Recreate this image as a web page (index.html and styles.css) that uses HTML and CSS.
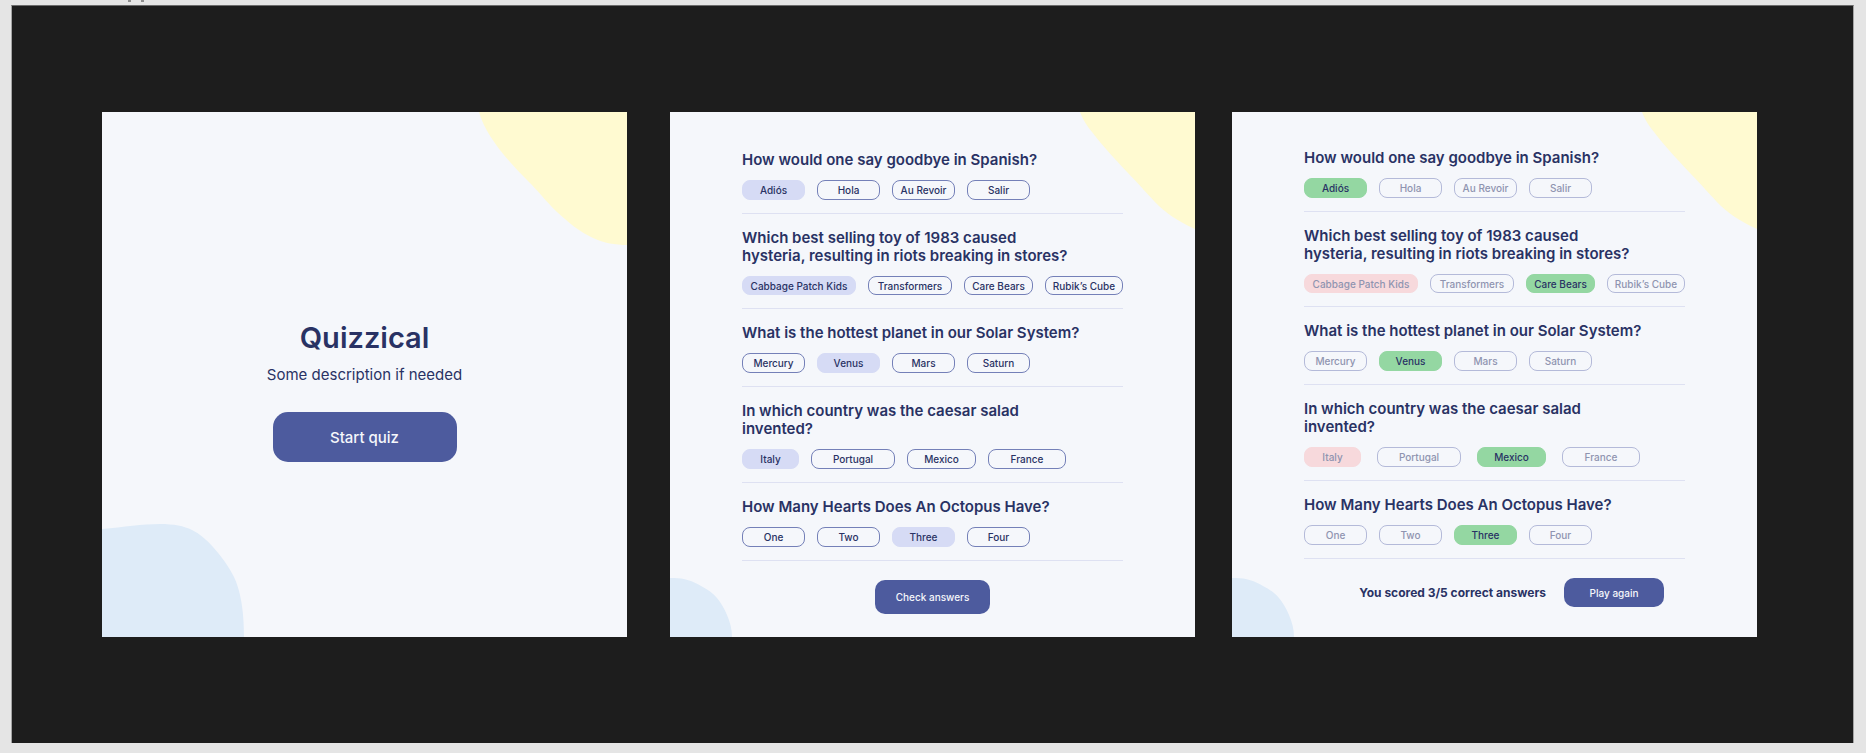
FILE: index.html
```html
<!DOCTYPE html>
<html lang="en">
<head>
<meta charset="utf-8">
<title>Quizzical</title>
<link rel="stylesheet" href="styles.css">
</head>
<body>
<div class="marks" aria-hidden="true"></div>
<main class="board">
  <section class="card card--intro">
    <svg class="blob blob--top" width="150" height="134" viewBox="0 0 150 134" aria-hidden="true"><path d="M2 0C8 22 28 46 50 68C64 82 66 86 80 100C92 111 103 120 116 126C127 131 138 133 150 133V0Z"/></svg>
    <svg class="blob blob--bottom" width="143" height="113" viewBox="0 0 143 113" aria-hidden="true"><path d="M0 5C22 3 40 0 58 0C72 0 82 2 90 6C98 10 105 16 111 23C120 33 127 43 132 53C138 66 142 84 142 113H0Z"/></svg>
    <h1 class="intro-title">Quizzical</h1>
    <p class="intro-text">Some description if needed</p>
    <button class="btn btn--large" type="button">Start quiz</button>
  </section>

  <section class="card card--quiz">
    <svg class="blob blob--top" width="118" height="118" viewBox="0 0 118 118" aria-hidden="true"><path d="M3 0C6 8 10 14 15 20C24 32 36 45 51 61C64 74 70 82 82 94C90 101 98 108 118 117V0Z"/></svg>
    <svg class="blob blob--bottom" width="62" height="59" viewBox="0 0 62 59" aria-hidden="true"><path d="M0 0H4C14 0 23 3 31 8C37 11 43 15 47 20C51 25 54 30 57 37C60 44 62 51 62 59H0Z"/></svg>
    <div class="item">
      <h2 class="question">How would one say goodbye in Spanish?</h2>
      <div class="options">
        <button class="chip chip--sm is-selected" type="button">Adiós</button>
        <button class="chip chip--sm" type="button">Hola</button>
        <button class="chip chip--sm" type="button">Au Revoir</button>
        <button class="chip chip--sm" type="button">Salir</button>
      </div>
    </div>
    <div class="item item--compact">
      <h2 class="question">Which best selling toy of 1983 caused<br>hysteria, resulting in riots breaking in stores?</h2>
      <div class="options">
        <button class="chip chip--2xl is-selected" type="button">Cabbage Patch Kids</button>
        <button class="chip chip--xl" type="button">Transformers</button>
        <button class="chip chip--md" type="button">Care Bears</button>
        <button class="chip chip--lg" type="button">Rubik’s Cube</button>
      </div>
    </div>
    <div class="item">
      <h2 class="question">What is the hottest planet in our Solar System?</h2>
      <div class="options">
        <button class="chip chip--sm" type="button">Mercury</button>
        <button class="chip chip--sm is-selected" type="button">Venus</button>
        <button class="chip chip--sm" type="button">Mars</button>
        <button class="chip chip--sm" type="button">Saturn</button>
      </div>
    </div>
    <div class="item">
      <h2 class="question">In which country was the caesar salad<br>invented?</h2>
      <div class="options">
        <button class="chip chip--xs is-selected" type="button">Italy</button>
        <button class="chip chip--xl" type="button">Portugal</button>
        <button class="chip chip--md" type="button">Mexico</button>
        <button class="chip chip--lg" type="button">France</button>
      </div>
    </div>
    <div class="item">
      <h2 class="question">How Many Hearts Does An Octopus Have?</h2>
      <div class="options">
        <button class="chip chip--sm" type="button">One</button>
        <button class="chip chip--sm" type="button">Two</button>
        <button class="chip chip--sm is-selected" type="button">Three</button>
        <button class="chip chip--sm" type="button">Four</button>
      </div>
    </div>
    <div class="footer">
      <button class="btn btn--check" type="button">Check answers</button>
    </div>
  </section>

  <section class="card card--result">
    <svg class="blob blob--top" width="118" height="118" viewBox="0 0 118 118" aria-hidden="true"><path d="M3 0C6 8 10 14 15 20C24 32 36 45 51 61C64 74 70 82 82 94C90 101 98 108 118 117V0Z"/></svg>
    <svg class="blob blob--bottom" width="62" height="59" viewBox="0 0 62 59" aria-hidden="true"><path d="M0 0H4C14 0 23 3 31 8C37 11 43 15 47 20C51 25 54 30 57 37C60 44 62 51 62 59H0Z"/></svg>
    <div class="item">
      <h2 class="question">How would one say goodbye in Spanish?</h2>
      <div class="options">
        <button class="chip chip--sm is-correct" type="button" disabled>Adiós</button>
        <button class="chip chip--sm" type="button" disabled>Hola</button>
        <button class="chip chip--sm" type="button" disabled>Au Revoir</button>
        <button class="chip chip--sm" type="button" disabled>Salir</button>
      </div>
    </div>
    <div class="item item--compact">
      <h2 class="question">Which best selling toy of 1983 caused<br>hysteria, resulting in riots breaking in stores?</h2>
      <div class="options">
        <button class="chip chip--2xl is-wrong" type="button" disabled>Cabbage Patch Kids</button>
        <button class="chip chip--xl" type="button" disabled>Transformers</button>
        <button class="chip chip--md is-correct" type="button" disabled>Care Bears</button>
        <button class="chip chip--lg" type="button" disabled>Rubik’s Cube</button>
      </div>
    </div>
    <div class="item">
      <h2 class="question">What is the hottest planet in our Solar System?</h2>
      <div class="options">
        <button class="chip chip--sm" type="button" disabled>Mercury</button>
        <button class="chip chip--sm is-correct" type="button" disabled>Venus</button>
        <button class="chip chip--sm" type="button" disabled>Mars</button>
        <button class="chip chip--sm" type="button" disabled>Saturn</button>
      </div>
    </div>
    <div class="item">
      <h2 class="question">In which country was the caesar salad<br>invented?</h2>
      <div class="options options--wide">
        <button class="chip chip--xs is-wrong" type="button" disabled>Italy</button>
        <button class="chip chip--xl" type="button" disabled>Portugal</button>
        <button class="chip chip--md is-correct" type="button" disabled>Mexico</button>
        <button class="chip chip--lg" type="button" disabled>France</button>
      </div>
    </div>
    <div class="item">
      <h2 class="question">How Many Hearts Does An Octopus Have?</h2>
      <div class="options">
        <button class="chip chip--sm" type="button" disabled>One</button>
        <button class="chip chip--sm" type="button" disabled>Two</button>
        <button class="chip chip--sm is-correct" type="button" disabled>Three</button>
        <button class="chip chip--sm" type="button" disabled>Four</button>
      </div>
    </div>
    <div class="footer footer--result">
      <p class="score">You scored 3/5 correct answers</p>
      <button class="btn btn--again" type="button">Play again</button>
    </div>
  </section>
</main>
</body>
</html>
```
FILE: styles.css
```css
:root {
  --navy: #293264;
  --primary: #4d5b9e;
  --page: #f5f7fb;
}

* { box-sizing: border-box; }

body {
  margin: 0;
  min-height: 100vh;
  padding: 5px 12px 10px 11px;
  display: flex;
  flex-direction: column;
  background: #e5e5e5;
  color: var(--navy);
  font-family: Inter, "Liberation Sans", sans-serif;
}

h1, h2, p { margin: 0; }

.marks {
  position: absolute;
  top: 0;
  left: 128px;
  width: 16px;
  height: 2px;
  border: solid #8e8e8e;
  border-width: 0 3px;
}

.board {
  flex: 1;
  display: grid;
  grid-template-columns: minmax(0, 1fr) 43px minmax(0, 1fr) 37px minmax(0, 1fr);
  align-items: start;
  padding: 106px 96px 106px 90px;
  background: #1d1d1d;
  border: solid #a4a4a4;
  border-width: 0 1px;
  border-top: 1px solid #6b6b6b;
}

.card {
  position: relative;
  min-height: 525px;
  padding: 24px 72px 20px;
  overflow: hidden;
  background: var(--page);
}

.card--quiz { grid-column: 3; }
.card--result { grid-column: 5; padding-top: 22px; }

.card--intro {
  grid-column: 1;
  display: flex;
  flex-direction: column;
  align-items: center;
  justify-content: center;
  padding: 33px 20px 0;
}

.blob { position: absolute; }
.blob--top { top: 0; right: 0; fill: #fffad1; }
.blob--bottom { bottom: 0; left: 0; fill: #deebf8; }

.intro-title { font-size: 29px; line-height: 36px; font-weight: 600; }
.intro-text { margin-top: 9px; font-size: 15px; line-height: 20px; }

.btn {
  border: 0;
  padding: 0;
  background: var(--primary);
  color: var(--page);
  font-family: inherit;
  font-weight: 500;
  font-size: 10px;
}

.btn--large { margin-top: 27px; width: 184px; height: 50px; border-radius: 15px; font-size: 15px; }
.btn--check { width: 115px; height: 34px; border-radius: 10px; }
.btn--again { width: 100px; height: 29px; border-radius: 10px; }

.item {
  position: relative;
  padding: 15px 0 13px;
  border-bottom: 1px solid #dee1f2;
}

.question { font-size: 15px; line-height: 18px; font-weight: 600; white-space: nowrap; }

.options { display: flex; gap: 12px; margin-top: 11px; }
.options--wide { gap: 16px; }

.chip {
  height: 20px;
  padding: 0;
  border: 1px solid #7480b8;
  border-radius: 8px;
  background: transparent;
  color: var(--navy);
  font-family: inherit;
  font-size: 10px;
  line-height: 12px;
  font-weight: 500;
  white-space: nowrap;
}

.item--compact .chip { height: 19px; }

.chip--xs { width: 57px; }
.chip--sm { width: 63px; }
.chip--md { width: 69px; }
.chip--lg { width: 78px; }
.chip--xl { width: 84px; }
.chip--2xl { width: 114px; }

.chip:disabled { border-color: #b4bad9; color: #8f94b0; }
.chip.is-selected { background: #d6dbf5; border-color: #d6dbf5; }
.chip.is-correct { background: #94d7a2; border-color: #94d7a2; color: var(--navy); }
.chip.is-wrong { background: #f7d9dc; border-color: #f7d9dc; }

.footer { display: flex; justify-content: center; align-items: center; margin-top: 19px; }
.footer--result { justify-content: flex-end; gap: 18px; padding-right: 21px; }

.score { font-size: 12px; line-height: 16px; font-weight: 700; }
```
